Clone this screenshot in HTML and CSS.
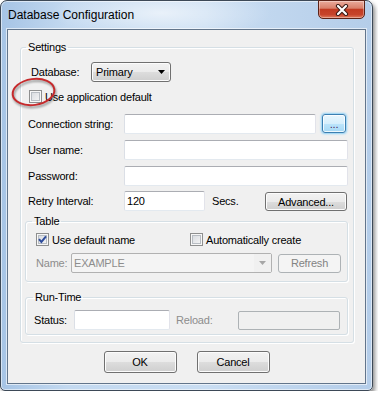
FILE: index.html
```html
<!DOCTYPE html>
<html lang="en">
<head>
  <meta charset="UTF-8" />
  <title>Database Configuration</title>
  <link rel="stylesheet" href="styles.css">
</head>
<body>
  <div class="window">
    <!-- title bar -->
    <div class="titlebar">
      <span class="title">Database Configuration</span>
      <button class="close" type="button" aria-label="Close">
        <svg width="16" height="12" viewBox="0 0 16 12">
          <path d="M4 2 L12 10 M12 2 L4 10" stroke="#3a1a14" stroke-width="4.2" stroke-linecap="round"/>
          <path d="M4 2 L12 10 M12 2 L4 10" stroke="#fff" stroke-width="2.2" stroke-linecap="round"/>
        </svg>
      </button>
    </div>

    <div class="client">
      <fieldset class="group settings">
        <legend>Settings</legend>

        <div class="row db-row">
          <label class="lbl-db">Database:</label>
          <div class="dropdown">
            <span>Primary</span>
            <svg class="arrow" width="7" height="4" viewBox="0 0 7 4"><polygon points="0,0 7,0 3.5,4" fill="#000"/></svg>
          </div>
        </div>

        <div class="row check-row app-default">
          <span class="check"></span>
          <span class="check-text">Use application default</span>
          <!-- red annotation circle -->
          <svg class="annot" width="50" height="32" viewBox="0 0 50 32">
            <ellipse cx="24.5" cy="16" rx="21" ry="13" transform="rotate(-8 24.5 16)" fill="none" stroke="#c62a2c" stroke-width="2"/>
          </svg>
        </div>

        <div class="row field-row first">
          <label class="lbl">Connection string:</label>
          <span class="textbox w-conn"></span>
          <button class="btn btn-browse" type="button">...</button>
        </div>
        <div class="row field-row">
          <label class="lbl">User name:</label>
          <span class="textbox w-full"></span>
        </div>
        <div class="row field-row">
          <label class="lbl">Password:</label>
          <span class="textbox w-full"></span>
        </div>
        <div class="row field-row retry">
          <label class="lbl">Retry Interval:</label>
          <span class="textbox w-retry">120</span>
          <span class="secs">Secs.</span>
          <button class="btn btn-adv" type="button">Advanced...</button>
        </div>

        <fieldset class="group table">
          <legend>Table</legend>
          <div class="row check-row">
            <span class="check-item">
              <span class="check checked">
                <svg width="11" height="11" viewBox="0 0 11 11"><path d="M2 5.2 L4.4 8 L9 2.4" fill="none" stroke="#2f4d9c" stroke-width="2"/></svg>
              </span>
              <span class="check-text">Use default name</span>
            </span>
            <span class="check"></span>
            <span class="check-text">Automatically create</span>
          </div>
          <div class="row name-row">
            <label class="lbl-name disabled">Name:</label>
            <div class="combo disabled">
              <span class="combo-text">EXAMPLE</span>
              <span class="combo-btn">
                <svg width="7" height="4" viewBox="0 0 7 4"><polygon points="0,0 7,0 3.5,4" fill="#a6a6a6"/></svg>
              </span>
            </div>
            <button class="btn btn-refresh" type="button" disabled>Refresh</button>
          </div>
        </fieldset>

        <fieldset class="group runtime">
          <legend>Run-Time</legend>
          <div class="row status-row">
            <label class="lbl-status">Status:</label>
            <span class="textbox w-status"></span>
            <label class="lbl-reload disabled">Reload:</label>
            <span class="textbox w-reload disabled"></span>
          </div>
        </fieldset>
      </fieldset>

      <div class="buttons">
        <button class="btn btn-dlg" type="button">OK</button>
        <button class="btn btn-dlg" type="button">Cancel</button>
      </div>
    </div>
  </div>
</body>
</html>
```

FILE: styles.css
```css
/* page + window frame */
body {
  margin: 0;
  background: #fff;
  font-family: "Liberation Sans", Arial, sans-serif;
  font-size: 11px;
  letter-spacing: -0.2px;
  color: #000;
}
.window {
  width: 373px;
  height: 391px;
  box-sizing: border-box;
  border: 1px solid #3d4957;
  border-radius: 7px 7px 5px 5px;
  padding: 0 6px 6px;
  display: flex;
  flex-direction: column;
  background:
    radial-gradient(ellipse 110px 26px at 160px 12px, rgba(255,255,255,0.6), rgba(255,255,255,0)),
    linear-gradient(to right, #a6c4e5, #c3d9f0 18%, #c9ddf2 55%, #b4cde9);
  box-shadow: inset 0 0 0 1px rgba(255,255,255,0.55), 2px 3px 4px rgba(0,0,0,0.45);
}

/* title bar */
.titlebar {
  height: 28px;
  display: flex;
  justify-content: space-between;
  align-items: flex-start;
}
.title {
  font-size: 12px;
  letter-spacing: 0;
  line-height: 29px;
  padding-left: 1px;
}
.close {
  width: 47px;
  height: 19px;
  margin: -1px 1px 0 0;
  padding: 0;
  border: 1px solid #5b2217;
  border-radius: 0 0 5px 5px;
  background: linear-gradient(#eaab9c, #d9806b 42%, #c23b22 50%, #c6442b 80%, #df7a5c);
  box-shadow: inset 0 0 0 1px rgba(255,255,255,0.35);
  display: flex;
  align-items: center;
  justify-content: center;
}

/* client area */
.client {
  flex: 1;
  border: 1px solid #62758b;
  background: #f0f0f0;
  box-shadow: 0 0 0 1px rgba(255,255,255,0.6);
  display: flex;
  flex-direction: column;
}

/* group boxes */
.group {
  margin: 0;
  padding: 0;
  min-width: 0;
  border: 1px solid #d5dfe5;
  border-radius: 3px;
  box-shadow: inset 1px 1px 0 #fff, 1px 1px 0 #fff;
}
.group > legend {
  padding: 0 2px;
  line-height: 13px;
}
.settings { margin: 11px 11px 0 12px; padding-bottom: 7px; }
.settings > legend { margin-left: 5px; }
.table { margin: 4px 5px 0 4px; padding-bottom: 8px; }
.table > legend { margin-left: 6px; }
.runtime { margin: 9px 5px 0 4px; padding-bottom: 4px; }
.runtime > legend { margin-left: 7px; }

/* rows */
.row {
  display: flex;
  align-items: center;
  height: 20px;
}
.db-row { margin-top: 8px; }
.lbl-db { margin-left: 10px; width: 60px; }
.app-default { margin-top: 8px; height: 13px; position: relative; }
.app-default .check { margin-left: 8px; }
.field-row { margin-top: 6px; }
.field-row.first { margin-top: 11px; }
.field-row.retry { margin-top: 5px; }
.lbl { margin-left: 7px; width: 96px; }

.check-row { height: 13px; }
.table .check-row { margin-top: 5px; }
.check-item { display: flex; align-items: center; width: 154px; margin-left: 10px; }
.check-text { margin-left: 3px; }

.name-row { margin-top: 7px; }
.lbl-name { margin-left: 10px; width: 35px; }
.status-row { margin-top: 6px; }
.lbl-status { margin-left: 8px; width: 40px; }
.lbl-reload { margin-left: 6px; width: 62px; }
.disabled { color: #8d8d8d; }

/* text boxes */
.textbox {
  box-sizing: border-box;
  height: 20px;
  background: #fff;
  border: 1px solid;
  border-color: #abadb3 #e2e3ea #e3e9ef #dbdfe6;
  border-radius: 2px;
  padding-left: 2px;
  line-height: 18px;
}
.w-conn { width: 192px; }
.w-full { width: 224px; }
.w-retry { width: 81px; }
.w-status { width: 96px; }
.textbox.w-reload {
  width: 102px;
  height: 19px;
  background: #f0f0f0;
  border-color: #adb2b5;
}
.secs { margin-left: 7px; width: 53px; }

/* buttons */
.btn {
  box-sizing: border-box;
  border: 1px solid #707070;
  border-radius: 3px;
  background: linear-gradient(#f2f2f2, #ebebeb 50%, #dddddd 50%, #cfcfcf);
  box-shadow: inset 0 0 0 1px #fcfcfc;
  font: inherit;
  letter-spacing: inherit;
  color: #000;
  padding: 0;
}
.btn:disabled {
  border-color: #adb2b5;
  background: #f4f4f4;
  box-shadow: none;
  color: #838383;
}
.btn-browse {
  width: 24px;
  height: 19px;
  margin-left: 6px;
  align-self: flex-start;
  border-color: #3c7fb1;
  background: linear-gradient(#e9f6fd, #d6effc 50%, #bde5fb 50%, #a5d8f5);
  box-shadow: inset 0 0 0 1px rgba(255,255,255,0.8), 0 0 2px 1px #8fd1f6;
  color: #4b2a5c;
  line-height: 12px;
}
.btn-adv { width: 82px; height: 19px; margin-top: 1px; }
.btn-refresh { width: 63px; height: 19px; margin-left: 6px; }
.btn-dlg { width: 73px; height: 22px; }

/* dropdowns */
.dropdown {
  box-sizing: border-box;
  width: 80px;
  height: 20px;
  display: flex;
  align-items: center;
  padding-left: 4px;
  border: 1px solid #707070;
  border-radius: 3px;
  background: linear-gradient(#f2f2f2, #ebebeb 50%, #dddddd 50%, #cfcfcf);
  box-shadow: inset 0 0 0 1px #fcfcfc;
}
.dropdown .arrow { margin-left: auto; margin-right: 5px; }
.combo {
  box-sizing: border-box;
  width: 201px;
  height: 20px;
  display: flex;
  border: 1px solid #b1b1b1;
  border-radius: 2px;
  background: #f4f4f4;
}
.combo-text { flex: 1; padding-left: 2px; line-height: 18px; }
.combo-btn {
  width: 17px;
  display: flex;
  align-items: center;
  justify-content: center;
  background: #f0f0f0;
}

/* check boxes */
.check {
  box-sizing: border-box;
  width: 13px;
  height: 13px;
  flex: none;
  border: 1px solid #8e8f8f;
  background: linear-gradient(135deg, #d3d7dc, #f9f9f9);
  box-shadow: inset 0 0 0 1px #f7f7f7, inset 0 0 0 2px #b8bdc3;
  position: relative;
}
.check svg { position: absolute; left: 0; top: 0; }

/* annotation over the first check box */
.annot {
  position: absolute;
  left: -12px;
  top: -14px;
  overflow: visible;
  filter: drop-shadow(1px 2px 1.2px rgba(0,0,0,0.4));
}

/* dialog buttons */
.buttons {
  display: flex;
  justify-content: center;
  gap: 20px;
  margin-top: 8px;
}
```
